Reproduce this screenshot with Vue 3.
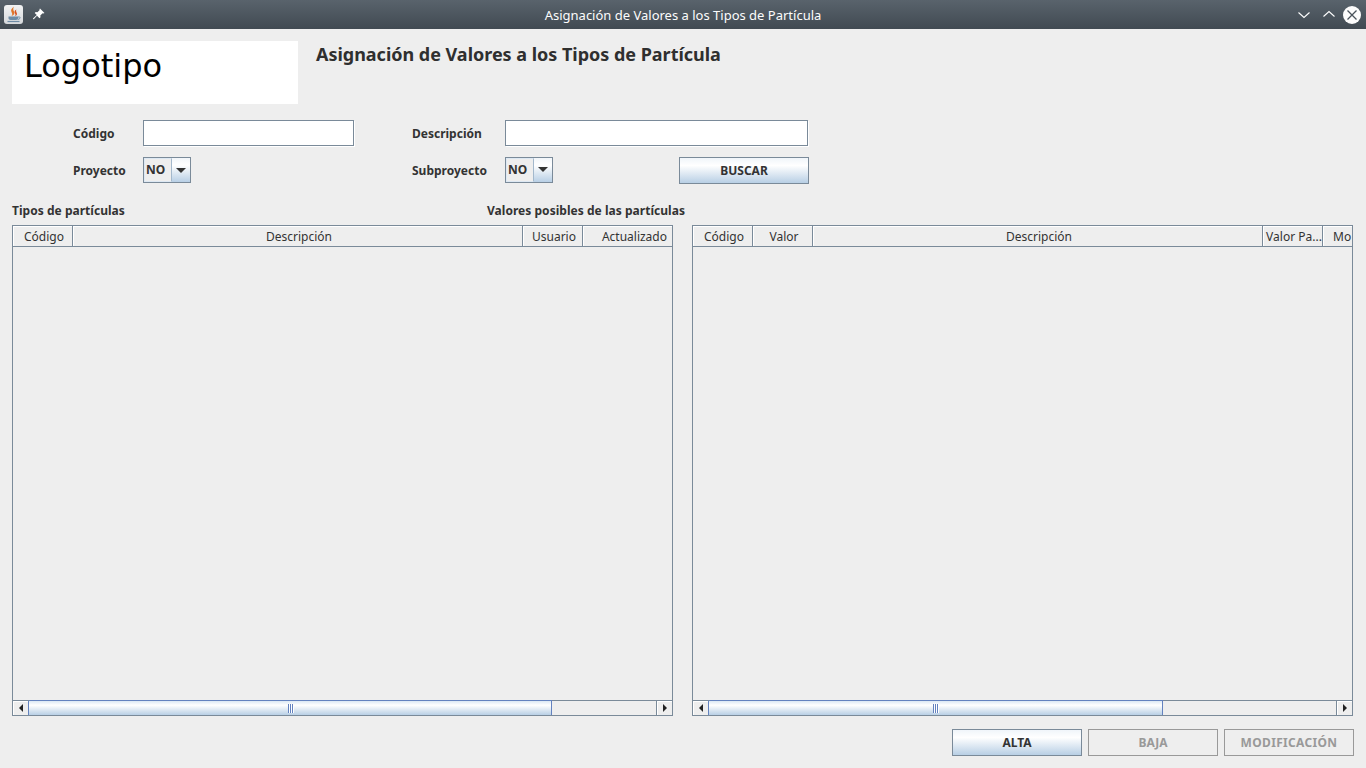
<script setup>
const leftCols = [
  { label: 'Código', width: 60 },
  { label: 'Descripción', width: 450 },
  { label: 'Usuario', width: 60 },
  { label: 'Actualizado', width: 89, end: true },
]
const rightCols = [
  { label: 'Código', width: 60 },
  { label: 'Valor', width: 60 },
  { label: 'Descripción', width: 450 },
  { label: 'Valor Pa...', width: 60 },
  { label: 'Mo', width: 29, clip: true },
]
const tables = [
  { title: 'Tipos de partículas', cols: leftCols, thumb: 523, grip: 259 },
  { title: 'Valores posibles de las partículas', cols: rightCols, thumb: 454, grip: 224 },
]
</script>

<template>
  <div class="window">
    <header class="titlebar">
      <div class="tb-left">
        <span class="app-icon">
          <svg width="19" height="19" viewBox="0 0 19 19">
            <path d="M10 1.500c-2.500 2-3.500 3.500-2.500 5.500s1 2.500 0 4c2.500-1 3.500-2.500 2.500-4.500s-1-3 0-5z" fill="#e0762a" />
            <path d="M12.500 4.500c-2 1-2.500 2.500-1.500 4s.5 2-.5 2.800c2.200-.5 3-2 2.200-3.600s-.8-2.200-.2-3.200z" fill="#d9531e" />
            <path d="M4.500 11.500h9.500v1.800c0 1-1 1.700-2 1.700H6.500c-1 0-2-.7-2-1.700z" fill="#6d8ba5" />
            <path d="M14 12h1.500c1 0 1 2.200-1.800 2.400" fill="none" stroke="#6d8ba5" />
            <path d="M3.500 16.500h12" stroke="#6d8ba5" stroke-width="1.200" />
          </svg>
        </span>
        <svg class="pin" width="12" height="12" viewBox="0 0 12 12">
          <path d="M7 .5l4.500 4.500-1.200.6-.7-.3L7.300 7.600l.2 1.700-1 1L4 7.800.8 11.200 0 11l.2-.8L3.800 7 1.700 5l1-1 1.700.2 2.300-2.300-.3-.7z" fill="#fff" />
        </svg>
      </div>
      <span class="tb-title">Asignación de Valores a los Tipos de Partícula</span>
      <div class="tb-right">
        <svg class="down" width="12" height="8" viewBox="0 0 12 8"><path d="M.5 1.500l5.500 5 5.500-5" fill="none" stroke="#fff" stroke-width="1.100" /></svg>
        <svg class="up" width="12" height="8" viewBox="0 0 12 8"><path d="M.5 6.500l5.500-5 5.500 5" fill="none" stroke="#fff" stroke-width="1.100" /></svg>
        <span class="close">
          <svg width="18" height="18" viewBox="0 0 18 18"><path d="M4.500 4.500l9 9M13.500 4.500l-9 9" stroke="#4a535b" stroke-width="1.300" /></svg>
        </span>
      </div>
    </header>

    <main class="content">
      <section class="head">
        <div class="logo">Logotipo</div>
        <h1>Asignación de Valores a los Tipos de Partícula</h1>
      </section>

      <section class="filters">
        <label>Código</label>
        <div class="input"></div>
        <label class="second">Descripción</label>
        <div class="input"></div>

        <label>Proyecto</label>
        <div class="combo"><span class="combo-val">NO</span><span class="combo-btn"><i></i></span></div>
        <label class="second">Subproyecto</label>
        <div class="sub-row">
          <div class="combo"><span class="combo-val">NO</span><span class="combo-btn"><i></i></span></div>
          <button class="btn search">BUSCAR</button>
        </div>
      </section>

      <section class="captions">
        <span v-for="t in tables" :key="t.title">{{ t.title }}</span>
      </section>

      <section class="tables">
        <div v-for="t in tables" :key="t.title" class="table">
          <div class="thead">
            <div
              v-for="c in t.cols"
              :key="c.label"
              class="th"
              :class="{ end: c.end, clip: c.clip }"
              :style="{ width: c.width + 'px' }"
            >{{ c.label }}</div>
          </div>
          <div class="tbody"></div>
          <div class="scrollbar">
            <span class="arrow"><i class="tri-l"></i></span>
            <div class="track">
              <div class="thumb" :style="{ width: t.thumb + 'px' }">
                <span class="grip" :style="{ left: t.grip + 'px' }"></span>
              </div>
            </div>
            <span class="arrow"><i class="tri-r"></i></span>
          </div>
        </div>
      </section>

      <footer class="actions">
        <button class="btn">ALTA</button>
        <button class="btn off">BAJA</button>
        <button class="btn off wide">MODIFICACIÓN</button>
      </footer>
    </main>
  </div>
</template>

<style>
html, body { margin: 0; background: #eeeeee; }
</style>

<style scoped>
.window {
  width: 1366px;
  height: 768px;
  display: flex;
  flex-direction: column;
  overflow: hidden;
  background: #eeeeee;
  color: #333333;
  font: 12px "Noto Sans", sans-serif;
}

.titlebar {
  height: 29px;
  flex: none;
  display: flex;
  align-items: center;
  justify-content: space-between;
  position: relative;
  background: linear-gradient(#59636c, #414a52);
  color: #fcfcfc;
}
.tb-left { display: flex; align-items: center; gap: 10px; padding-left: 4px; }
.app-icon {
  width: 19px;
  height: 19px;
  display: flex;
  border-radius: 3px;
  background: linear-gradient(#f2f3f4, #d5d8db);
}
.pin { margin-top: -1px; }
.tb-title {
  position: absolute;
  left: 0;
  right: 0;
  text-align: center;
  font: 13px "Noto Sans", sans-serif;
}
.tb-right { display: flex; align-items: center; padding-right: 5px; }
.down { margin-top: 1px; }
.up { margin: -2px 8px 0 13px; }
.close {
  width: 18px;
  height: 18px;
  border-radius: 50%;
  background: #fcfcfc;
}
.close svg { display: block; }

.content {
  flex: 1;
  display: flex;
  flex-direction: column;
  padding: 12px;
  min-height: 0;
}

.head { display: flex; gap: 18px; height: 63px; flex: none; }
.logo {
  width: 286px;
  height: 63px;
  box-sizing: border-box;
  padding: 5px 0 0 12px;
  background: #fff;
  color: #000;
  font: 32px/40px "DejaVu Sans", sans-serif;
}
h1 {
  margin: 0;
  padding-top: 1px;
  font: bold 18px/24px "Noto Sans", sans-serif;
  letter-spacing: -0.02px;
  color: #2f2f2f;
}

.filters {
  display: grid;
  grid-template-columns: 70px 211px 151px 303px;
  grid-auto-rows: 26px;
  row-gap: 11px;
  margin: 16px 0 0 61px;
  align-items: center;
  flex: none;
}
.filters label { font-weight: bold; padding-top: 1px; }
.filters .second { margin-left: 58px; white-space: nowrap; }

.input {
  height: 26px;
  box-sizing: border-box;
  background: #fff;
  border: 1px solid #7a8a99;
  box-shadow: 1px 1px 0 #fff;
}
.sub-row { display: flex; justify-content: space-between; align-items: flex-start; margin-right: -1px; height: 27px; }

.combo {
  width: 48px;
  height: 26px;
  box-sizing: border-box;
  display: flex;
  border: 1px solid #7a8a99;
}
.combo-val {
  width: 28px;
  padding-left: 1px;
  box-sizing: border-box;
  font-weight: bold;
  line-height: 22px;
  background: #eeeeee;
  border: 1px solid #dde8f3;
  border-right: 1px solid #a3b8cc;
  color: #333;
}
.combo-btn {
  flex: 1;
  display: flex;
  align-items: center;
  justify-content: center;
  background: linear-gradient(#f2f6fa, #ffffff 30%, #b8cfe5);
}
.combo-btn i {
  width: 0;
  height: 0;
  border: 5px solid transparent;
  border-top: 5px solid #333;
  border-bottom: 0;
}

.btn {
  width: 130px;
  height: 27px;
  padding: 0;
  box-sizing: border-box;
  border: 1px solid #7a8a99;
  border-radius: 0;
  font: bold 12px "Noto Sans", sans-serif;
  color: #333;
  background: linear-gradient(#f0f5fa, #ffffff 30%, #b8cfe5);
}
.btn.off { background: #eeeeee; color: #999999; border-color: #999999; }
.btn.wide { letter-spacing: 0.33px; }

.captions {
  display: grid;
  grid-template-columns: 475px auto;
  margin-top: 20px;
  height: 15px;
  line-height: 15px;
  font-weight: bold;
  letter-spacing: 0.03px;
  flex: none;
}

.tables {
  flex: 1;
  min-height: 0;
  display: flex;
  gap: 19px;
  margin-top: 7px;
  margin-right: 1px;
}
.table {
  width: 661px;
  box-sizing: border-box;
  display: flex;
  flex-direction: column;
  border: 1px solid #7a8a99;
}
.thead { display: flex; height: 21px; box-sizing: border-box; flex: none; border-bottom: 1px solid #7a8a99; }
.th {
  box-sizing: border-box;
  flex: none;
  text-align: center;
  line-height: 21px;
  padding-left: 3px;
  border-right: 1px solid #7a8a99;
  box-shadow: inset 1px 1px 0 #fff;
  color: #333;
  white-space: nowrap;
  overflow: hidden;
}
.th:last-child { border-right: 0; }
.th.end { text-align: right; padding-right: 5px; }
.th.clip { text-align: left; padding-left: 10px; }
.tbody { flex: 1; }

.scrollbar {
  height: 15px;
  box-sizing: border-box;
  flex: none;
  display: flex;
  border-top: 1px solid #7a8a99;
}
.arrow {
  width: 15px;
  flex: none;
  display: flex;
  align-items: center;
  justify-content: center;
  background: #eeeeee;
  box-shadow: inset 1px 1px 0 #fff;
}
.tri-l, .tri-r { width: 0; height: 0; border: 4px solid transparent; }
.tri-l { border-right: 4px solid #222; border-left: 0; }
.tri-r { border-left: 4px solid #222; border-right: 0; }
.track { flex: 1; position: relative; border-left: 1px solid #6382bf; border-right: 1px solid #7a8a99; }
.thumb {
  height: 15px;
  margin-top: -1px;
  box-sizing: border-box;
  position: relative;
  border-top: 1px solid #6382bf;
  border-right: 1px solid #6382bf;
  background: linear-gradient(#dce8f4, #ffffff 30%, #b8cfe5);
}
.grip {
  position: absolute;
  top: 3px;
  width: 6px;
  height: 9px;
  background: repeating-linear-gradient(90deg, #6382bf 0 1px, #fff 1px 2px);
}

.actions {
  flex: none;
  display: flex;
  justify-content: flex-end;
  gap: 6px;
  margin-top: 13px;
}
</style>
